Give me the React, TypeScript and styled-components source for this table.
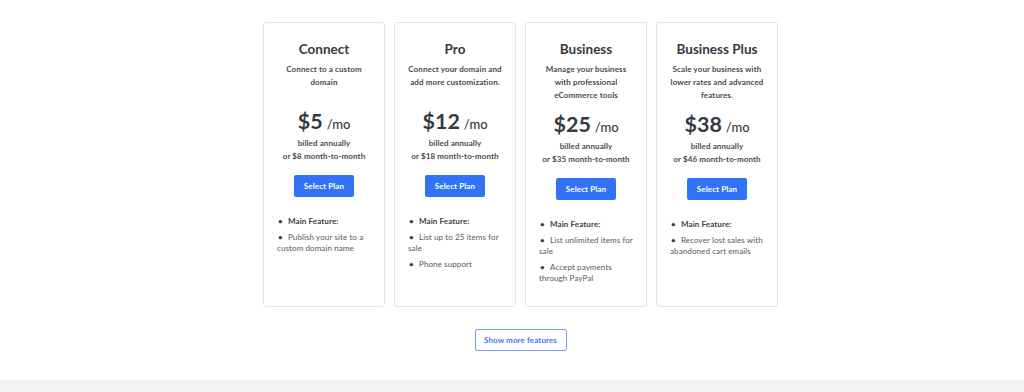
import React from "react";
import styled, { createGlobalStyle } from "styled-components";

const Global = createGlobalStyle`
  html, body { margin: 0; padding: 0; background: #ffffff; }
  body { font-family: Lato, "Open Sans", Arial, sans-serif; color: #333a42; }
  * { box-sizing: border-box; }
`;

const Page = styled.div`
  width: 1024px;
  height: 392px;
  display: flex;
  flex-direction: column;
  background: #ffffff;
`;

const Main = styled.main`
  flex: 1;
  display: flex;
  flex-direction: column;
  align-items: center;
  padding: 22px 0 0 17px;
`;

const Cards = styled.div`
  display: grid;
  grid-template-columns: repeat(4, 122px);
  gap: 9px;
`;

const Card = styled.section`
  height: 285px;
  border: 1px solid #e6e6e6;
  border-radius: 3px;
  padding: 18px 12px 0;
  display: flex;
  flex-direction: column;
  align-items: center;
  text-align: center;
`;

const Title = styled.h2`
  margin: 0;
  font-size: 13.5px;
  line-height: 16px;
  font-weight: 700;
  color: #333a42;
`;

const Desc = styled.p`
  margin: 6px 0 0;
  min-height: 36px;
  font-size: 8px;
  letter-spacing: 0.1px;
  line-height: 13px;
  font-weight: 700;
  color: #454b52;
`;

const Price = styled.div`
  margin-top: 9px;
  font-size: 21.5px;
  line-height: 26px;
  font-weight: 700;
  color: #333a42;
`;

const Per = styled.span`
  font-size: 13px;
  font-weight: 500;
  margin-left: 4px;
`;

const Billed = styled.p`
  margin: 0;
  font-size: 8px;
  letter-spacing: 0.1px;
  line-height: 13px;
  font-weight: 700;
  color: #454b52;
`;

const SelectButton = styled.button`
  margin-top: 12px;
  width: 60px;
  height: 22px;
  border: none;
  border-radius: 2px;
  background: #3173f6;
  color: #ffffff;
  font-family: inherit;
  font-size: 8px;
  letter-spacing: 0.1px;
  font-weight: 700;
  padding: 0;
`;

const Features = styled.ul`
  align-self: stretch;
  list-style: none;
  margin: 19px 0 0;
  padding: 0 0 0 1px;
  text-align: left;
`;

const Feature = styled.li<{ $strong?: boolean }>`
  font-size: 8px;
  letter-spacing: 0.1px;
  line-height: 11px;
  font-weight: ${(p) => (p.$strong ? 700 : 400)};
  color: ${(p) => (p.$strong ? "#3a4047" : "#53595f")};
  & + & { margin-top: 5px; }
  &::before {
    content: "•";
    display: inline-block;
    width: 10px;
    padding-left: 1px;
    color: #3a4047;
    font-weight: 700;
  }
`;

const MoreRow = styled.div`
  display: flex;
  margin-top: 22px;
`;

const MoreButton = styled.button`
  width: 92px;
  height: 22px;
  border: 1px solid #7c9ef8;
  border-radius: 2px;
  background: #ffffff;
  color: #4a74f2;
  font-family: inherit;
  font-size: 8px;
  letter-spacing: 0.1px;
  font-weight: 700;
  padding: 0;
`;

const Footer = styled.footer`
  height: 12px;
  background: #f3f4f6;
`;

type Plan = {
  name: string;
  desc: string;
  price: string;
  monthly: string;
  features: string[];
};

const plans: Plan[] = [
  {
    name: "Connect",
    desc: "Connect to a custom domain",
    price: "$5",
    monthly: "$8",
    features: ["Publish your site to a custom domain name"],
  },
  {
    name: "Pro",
    desc: "Connect your domain and add more customization.",
    price: "$12",
    monthly: "$18",
    features: ["List up to 25 items for sale", "Phone support"],
  },
  {
    name: "Business",
    desc: "Manage your business with professional eCommerce tools",
    price: "$25",
    monthly: "$35",
    features: ["List unlimited items for sale", "Accept payments through PayPal"],
  },
  {
    name: "Business Plus",
    desc: "Scale your business with lower rates and advanced features.",
    price: "$38",
    monthly: "$46",
    features: ["Recover lost sales with abandoned cart emails"],
  },
];

export default function App() {
  return (
    <Page>
      <Global />
      <Main>
        <Cards>
          {plans.map((p) => (
            <Card key={p.name}>
              <Title>{p.name}</Title>
              <Desc>{p.desc}</Desc>
              <Price>
                {p.price}
                <Per>/mo</Per>
              </Price>
              <Billed>billed annually</Billed>
              <Billed>or {p.monthly} month-to-month</Billed>
              <SelectButton>Select Plan</SelectButton>
              <Features>
                <Feature $strong>Main Feature:</Feature>
                {p.features.map((f) => (
                  <Feature key={f}>{f}</Feature>
                ))}
              </Features>
            </Card>
          ))}
        </Cards>
        <MoreRow>
          <MoreButton>Show more features</MoreButton>
        </MoreRow>
      </Main>
      <Footer />
    </Page>
  );
}
